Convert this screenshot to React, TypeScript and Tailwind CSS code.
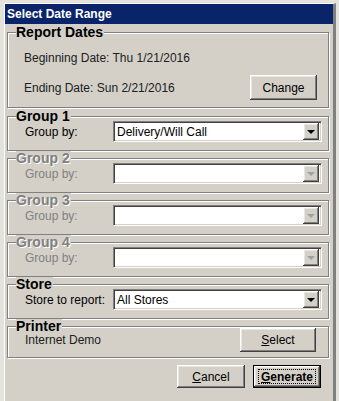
import React from 'react';

const raised =
  'bg-[#d4d0c8] shadow-[inset_-1px_-1px_0_#404040,inset_1px_1px_0_#ffffff,inset_-2px_-2px_0_#808080,inset_2px_2px_0_#e8e6e0]';

function GroupBox({
  title,
  disabled,
  className,
  children,
}: {
  title: string;
  disabled?: boolean;
  className?: string;
  children: React.ReactNode;
}) {
  return (
    <fieldset
      className={[
        'mx-[2px] mr-[4px] border border-[#808080] shadow-[inset_1px_1px_0_#ffffff,1px_1px_0_#ffffff]',
        className ?? '',
      ].join(' ')}
    >
      <legend
        className={[
          'ml-[8px] bg-[#d4d0c8] pr-[1px] text-[14px] font-bold leading-[14px]',
          disabled ? 'text-[#808080] [text-shadow:1px_1px_0_#ffffff]' : 'text-black',
        ].join(' ')}
      >
        {title}
      </legend>
      {children}
    </fieldset>
  );
}

function Combo({ value, disabled }: { value?: string; disabled?: boolean }) {
  return (
    <div className="flex h-[21px] w-[209px] items-center border border-t-[#808080] border-l-[#808080] border-b-white border-r-white bg-white shadow-[inset_1px_1px_0_#404040,inset_-1px_-1px_0_#d4d0c8]">
      <span className="flex-1 pl-[3px] text-[12px] leading-none text-black">{value}</span>
      <span className={`mr-[2px] flex h-[17px] w-[16px] items-center justify-center ${raised}`}>
        <span
          className={[
            'h-0 w-0 border-x-[4px] border-t-[4px] border-x-transparent',
            disabled ? 'border-t-[#a0a0a0]' : 'border-t-black',
          ].join(' ')}
        />
      </span>
    </div>
  );
}

function GroupRow({ n, value, disabled }: { n: number; value?: string; disabled?: boolean }) {
  return (
    <GroupBox title={`Group ${n}`} disabled={disabled}>
      <div className="-mt-[2px] flex items-center pb-[8px] pl-[17px]">
        <span className={`w-[88px] text-[12px] ${disabled ? 'text-[#808080]' : 'text-black'}`}>
          Group by:
        </span>
        <Combo value={value} disabled={disabled} />
      </div>
    </GroupBox>
  );
}

function Btn({
  children,
  className,
  primary,
}: {
  children: React.ReactNode;
  className?: string;
  primary?: boolean;
}) {
  if (primary) {
    return (
      <button
        type="button"
        className={`flex items-center justify-center border border-black ${raised} ${className ?? ''}`}
      >
        <span className="flex h-[15px] w-[58px] items-center justify-center border border-dotted border-black text-[12px] font-bold text-black">
          {children}
        </span>
      </button>
    );
  }
  return (
    <button
      type="button"
      className={`flex items-center justify-center text-[12px] text-black ${raised} ${className ?? ''}`}
    >
      {children}
    </button>
  );
}

export default function App() {
  return (
    <div className="h-[401px] w-[339px] overflow-hidden bg-[#e4e2dc] pt-[3px] pl-[4px] font-['Liberation_Sans',Arial,sans-serif]">
      <div className="h-[398px] w-[332px] border-t border-l border-white border-r-[3px] border-r-[#808080] bg-[#d4d0c8]">
        <div className="flex h-[20px] items-center bg-[#0a246a] pl-[2px] text-[12px] font-bold text-white">
          Select Date Range
        </div>

        <div className="pt-[1px]">
          <GroupBox title="Report Dates" className="pb-[7px]">
            <div className="pl-[16px] pr-[11px]">
              <div className="mt-[12px] text-[12px] leading-[14px] text-[#202020]">
                Beginning Date: Thu 1/21/2016
              </div>
              <div className="mt-[10px] flex items-center justify-between">
                <span className="text-[12px] text-[#202020]">Ending Date: Sun 2/21/2016</span>
                <Btn className="h-[25px] w-[67px]">Change</Btn>
              </div>
            </div>
          </GroupBox>

          <div className="mt-[1px]">
            <GroupRow n={1} value="Delivery/Will Call" />
            <GroupRow n={2} disabled />
            <GroupRow n={3} disabled />
            <GroupRow n={4} disabled />
            <GroupBox title="Store">
              <div className="-mt-[2px] flex items-center pb-[8px] pl-[17px]">
                <span className="w-[88px] text-[12px] text-black">Store to report:</span>
                <Combo value="All Stores" />
              </div>
            </GroupBox>
            <GroupBox title="Printer">
              <div className="-mt-[5px] flex items-center justify-between pb-[5px] pl-[17px] pr-[12px]">
                <span className="text-[12px] text-[#202020]">Internet Demo</span>
                <Btn className="h-[24px] w-[76px]">
                  <span className="underline">S</span>elect
                </Btn>
              </div>
            </GroupBox>
          </div>

          <div className="mt-[7px] flex justify-end gap-[8px] pr-[12px]">
            <Btn className="h-[23px] w-[68px]">
              <span className="underline">C</span>ancel
            </Btn>
            <Btn primary className="h-[23px] w-[68px]">
              <span className="underline">G</span>enerate
            </Btn>
          </div>
        </div>
      </div>
    </div>
  );
}
